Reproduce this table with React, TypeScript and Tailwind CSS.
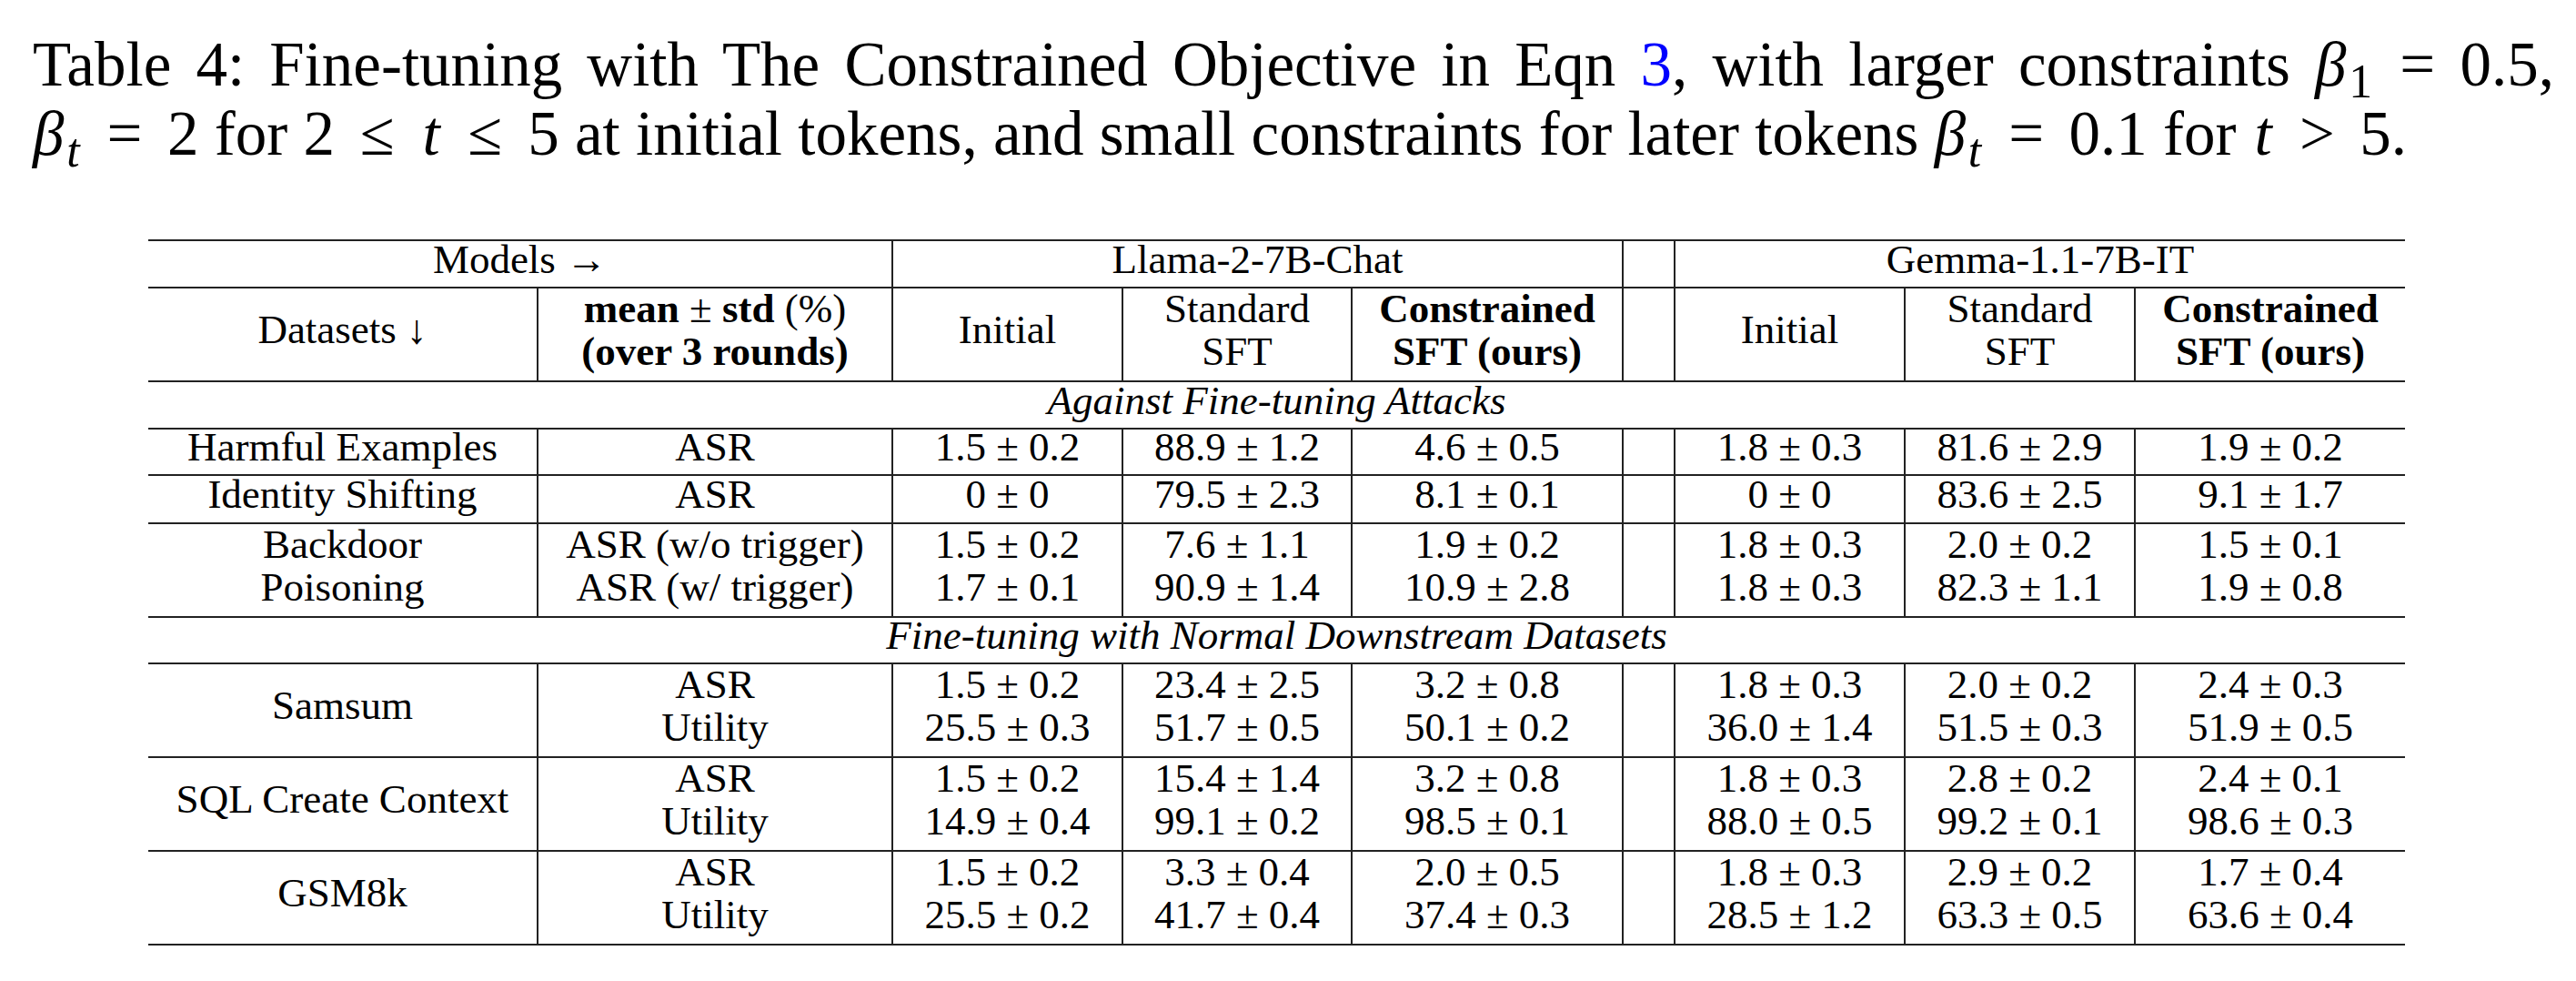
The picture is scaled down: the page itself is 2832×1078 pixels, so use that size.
import React from 'react';

type Row = {
  name: string[];
  metric: string[];
  llama: string[][];
  gemma: string[][];
  rowH: string;
};

const attackRows: Row[] = [
  {
    name: ['Harmful Examples'],
    metric: ['ASR'],
    llama: [['1.5 ± 0.2'], ['88.9 ± 1.2'], ['4.6 ± 0.5']],
    gemma: [['1.8 ± 0.3'], ['81.6 ± 2.9'], ['1.9 ± 0.2']],
    rowH: 'h-[51px]',
  },
  {
    name: ['Identity Shifting'],
    metric: ['ASR'],
    llama: [['0 ± 0'], ['79.5 ± 2.3'], ['8.1 ± 0.1']],
    gemma: [['0 ± 0'], ['83.6 ± 2.5'], ['9.1 ± 1.7']],
    rowH: 'h-[53px]',
  },
  {
    name: ['Backdoor', 'Poisoning'],
    metric: ['ASR (w/o trigger)', 'ASR (w/ trigger)'],
    llama: [['1.5 ± 0.2', '1.7 ± 0.1'], ['7.6 ± 1.1', '90.9 ± 1.4'], ['1.9 ± 0.2', '10.9 ± 2.8']],
    gemma: [['1.8 ± 0.3', '1.8 ± 0.3'], ['2.0 ± 0.2', '82.3 ± 1.1'], ['1.5 ± 0.1', '1.9 ± 0.8']],
    rowH: 'h-[103px]',
  },
];

const downstreamRows: Row[] = [
  {
    name: ['Samsum'],
    metric: ['ASR', 'Utility'],
    llama: [['1.5 ± 0.2', '25.5 ± 0.3'], ['23.4 ± 2.5', '51.7 ± 0.5'], ['3.2 ± 0.8', '50.1 ± 0.2']],
    gemma: [['1.8 ± 0.3', '36.0 ± 1.4'], ['2.0 ± 0.2', '51.5 ± 0.3'], ['2.4 ± 0.3', '51.9 ± 0.5']],
    rowH: 'h-[103px]',
  },
  {
    name: ['SQL Create Context'],
    metric: ['ASR', 'Utility'],
    llama: [['1.5 ± 0.2', '14.9 ± 0.4'], ['15.4 ± 1.4', '99.1 ± 0.2'], ['3.2 ± 0.8', '98.5 ± 0.1']],
    gemma: [['1.8 ± 0.3', '88.0 ± 0.5'], ['2.8 ± 0.2', '99.2 ± 0.1'], ['2.4 ± 0.1', '98.6 ± 0.3']],
    rowH: 'h-[103px]',
  },
  {
    name: ['GSM8k'],
    metric: ['ASR', 'Utility'],
    llama: [['1.5 ± 0.2', '25.5 ± 0.2'], ['3.3 ± 0.4', '41.7 ± 0.4'], ['2.0 ± 0.5', '37.4 ± 0.3']],
    gemma: [['1.8 ± 0.3', '28.5 ± 1.2'], ['2.9 ± 0.2', '63.3 ± 0.5'], ['1.7 ± 0.4', '63.6 ± 0.4']],
    rowH: 'h-[103px]',
  },
];

// one text line of the table, LaTeX-like strut
function Line({ children }: { children: React.ReactNode }) {
  return <div className="h-[47px] leading-[36px] whitespace-nowrap">{children}</div>;
}

const td = 'border-y-2 border-[#222] p-0 align-middle text-center';
const tdR = 'border-y-2 border-r-2 border-[#222] p-0 align-middle text-center';

function Cell({ lines, last }: { lines: string[]; last?: boolean }) {
  return (
    <td className={last ? td : tdR}>
      {lines.map((l, i) => (
        <Line key={i}>{l}</Line>
      ))}
    </td>
  );
}

function DataRow({ row }: { row: Row }) {
  return (
    <tr className={row.rowH}>
      <Cell lines={row.name} />
      <Cell lines={row.metric} />
      {row.llama.map((c, i) => (
        <Cell key={'l' + i} lines={c} />
      ))}
      <td className={tdR} />
      {row.gemma.map((c, i) => (
        <Cell key={'g' + i} lines={c} last={i === 2} />
      ))}
    </tr>
  );
}

function SectionRow({ label, h }: { label: string; h: string }) {
  return (
    <tr className={h}>
      <td colSpan={9} className={td}>
        <Line>
          <span className="italic">{label}</span>
        </Line>
      </td>
    </tr>
  );
}

function MethodHeads({ last }: { last?: boolean }) {
  return (
    <>
      <td className={tdR}>
        <Line>Initial</Line>
      </td>
      <td className={tdR}>
        <Line>Standard</Line>
        <Line>SFT</Line>
      </td>
      <td className={last ? td : tdR}>
        <Line>
          <span className="font-bold">Constrained</span>
        </Line>
        <Line>
          <span className="font-bold">SFT (ours)</span>
        </Line>
      </td>
    </>
  );
}

// math bits for the caption
function Rel({ children }: { children: React.ReactNode }) {
  return (
    <span className="inline-block w-[1.36em] text-center [text-align-last:center]">{children}</span>
  );
}

function Beta({ sub }: { sub: string }) {
  return (
    <span className="whitespace-nowrap">
      <span className="italic pr-[0.04em]">β</span>
      <sub className={sub === 't' ? 'italic pr-[0.05em]' : 'pr-[0.05em]'}>{sub}</sub>
    </span>
  );
}

function T() {
  return <span className="italic px-[0.04em]">t</span>;
}

export default function App() {
  return (
    <div className="w-full h-[1078px] bg-white text-black font-['Liberation_Serif',serif] overflow-hidden">
      {/* caption */}
      <div className="pt-[33px] pl-[36px] w-[2808px] text-[69px] leading-[76px]">
        <div className="text-justify [text-align-last:justify] whitespace-nowrap">
          Table 4: Fine-tuning with The Constrained Objective in Eqn{' '}
          <span className="text-[#0000ff]">3</span>, with larger constraints <Beta sub="1" />
          <Rel>=</Rel>0.5,
        </div>
        <div className="whitespace-nowrap">
          <Beta sub="t" />
          <Rel>=</Rel>2 for 2<Rel>≤</Rel>
          <T />
          <Rel>≤</Rel>5 at initial tokens, and small constraints for later tokens <Beta sub="t" />
          <Rel>=</Rel>0.1 for <T />
          <Rel>&gt;</Rel>5.
        </div>
      </div>

      {/* table */}
      <table className="mt-[78px] ml-[163px] w-[2481px] table-fixed border-collapse text-[45px]">
        <colgroup>
          <col className="w-[428px]" />
          <col className="w-[390px]" />
          <col className="w-[253px]" />
          <col className="w-[252px]" />
          <col className="w-[298px]" />
          <col className="w-[57px]" />
          <col className="w-[253px]" />
          <col className="w-[253px]" />
          <col className="w-[297px]" />
        </colgroup>
        <tbody>
          <tr className="h-[52px]">
            <td colSpan={2} className={tdR}>
              <Line>Models →</Line>
            </td>
            <td colSpan={3} className={tdR}>
              <Line>Llama-2-7B-Chat</Line>
            </td>
            <td className={tdR} />
            <td colSpan={3} className={td}>
              <Line>Gemma-1.1-7B-IT</Line>
            </td>
          </tr>
          <tr className="h-[103px]">
            <td className={tdR}>
              <Line>Datasets ↓</Line>
            </td>
            <td className={tdR}>
              <Line>
                <span className="font-bold">mean</span> ± <span className="font-bold">std</span> (%)
              </Line>
              <Line>
                <span className="font-bold">(over 3 rounds)</span>
              </Line>
            </td>
            <MethodHeads />
            <td className={tdR} />
            <MethodHeads last />
          </tr>
          <SectionRow label="Against Fine-tuning Attacks" h="h-[52px]" />
          {attackRows.map((r) => (
            <DataRow key={r.name.join(' ')} row={r} />
          ))}
          <SectionRow label="Fine-tuning with Normal Downstream Datasets" h="h-[51px]" />
          {downstreamRows.map((r) => (
            <DataRow key={r.name.join(' ')} row={r} />
          ))}
        </tbody>
      </table>
    </div>
  );
}
